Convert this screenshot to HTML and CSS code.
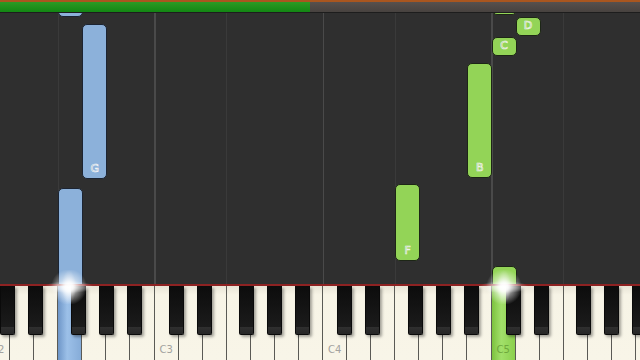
FILE: index.html
```html
<!DOCTYPE html>
<html lang="en">
<head>
    <meta charset="UTF-8">
    <title>Piano roll</title>
    <link rel="stylesheet" href="styles.css">
</head>
<body>
    <div class="progress">
        <div class="progress-fill"></div>
    </div>

    <div class="roll">
        <div class="lanes">
            <!-- falling notes, left = white key index * key width -->
            <div class="note blue" style="left: 72.2px; top: -20px; height: 24px;"></div>
            <div class="note blue" style="left: 96.3px; top: 11px; height: 155px;"><span>G</span></div>
            <div class="note blue" style="left: 72.2px; top: 175px; height: 120px;"></div>

            <div class="note green" style="left: 505.5px; top: -20px; height: 22px;"></div>
            <div class="note green" style="left: 529.5px; top: 4px; height: 19px;"><span>D</span></div>
            <div class="note green" style="left: 505.5px; top: 24px; height: 19px;"><span>C</span></div>
            <div class="note green" style="left: 481.4px; top: 50px; height: 115px;"><span>B</span></div>
            <div class="note green" style="left: 409.2px; top: 171px; height: 77px;"><span>F</span></div>
            <div class="note green" style="left: 505.5px; top: 253px; height: 60px;"></div>
        </div>
    </div>

    <div class="keyboard">
        <div class="glow glow-f2"></div>
        <div class="glow glow-c5"></div>
        <div class="keys">
            <div class="octave">
                <div class="white"><span>C2</span></div>
                <div class="white"></div>
                <div class="white"></div>
                <div class="white hit-blue"></div>
                <div class="white"></div>
                <div class="white"></div>
                <div class="white"></div>
                <div class="black cs"></div>
                <div class="black ds"></div>
                <div class="black fs"></div>
                <div class="black gs"></div>
                <div class="black as"></div>
            </div>
            <div class="octave">
                <div class="white"><span>C3</span></div>
                <div class="white"></div>
                <div class="white"></div>
                <div class="white"></div>
                <div class="white"></div>
                <div class="white"></div>
                <div class="white"></div>
                <div class="black cs"></div>
                <div class="black ds"></div>
                <div class="black fs"></div>
                <div class="black gs"></div>
                <div class="black as"></div>
            </div>
            <div class="octave">
                <div class="white"><span>C4</span></div>
                <div class="white"></div>
                <div class="white"></div>
                <div class="white"></div>
                <div class="white"></div>
                <div class="white"></div>
                <div class="white"></div>
                <div class="black cs"></div>
                <div class="black ds"></div>
                <div class="black fs"></div>
                <div class="black gs"></div>
                <div class="black as"></div>
            </div>
            <div class="octave">
                <div class="white hit-green"><span>C5</span></div>
                <div class="white"></div>
                <div class="white"></div>
                <div class="white"></div>
                <div class="white"></div>
                <div class="white"></div>
                <div class="white"></div>
                <div class="black cs"></div>
                <div class="black ds"></div>
                <div class="black fs"></div>
                <div class="black gs"></div>
                <div class="black as"></div>
            </div>
        </div>
    </div>
</body>
</html>
```

FILE: styles.css
```css
body, html {
    margin: 0;
    padding: 0;
    width: 640px;
    height: 360px;
    overflow: hidden;
    background-color: #2f2f2f;
    font-family: "DejaVu Sans", sans-serif;
}

.progress {
    height: 10px;
    border-top: 2px solid #a9561f;
    border-bottom: 1px solid #1d1d1d;
    background: linear-gradient(#57504d, #47423f);
}

.progress-fill {
    width: 310px;
    height: 100%;
    background: linear-gradient(#2c9a24, #138713);
}

.roll {
    height: 271px;
    overflow: hidden;
}

.lanes {
    position: relative;
    margin-left: -14px;
    width: 674px;
    height: 100%;
    background-color: #2f2f2f;
    background-image: repeating-linear-gradient(90deg,
        #4a4a4a 0, #4a4a4a 1px,
        transparent 1px, transparent 72px,
        #3a3a3a 72px, #3a3a3a 73px,
        transparent 73px, transparent 168.5px);
}

.note {
    position: absolute;
    width: 25px;
    box-sizing: border-box;
    border-radius: 5px;
    border: 1px solid #1d2616;
    display: flex;
    align-items: flex-end;
    justify-content: center;
}

.note.blue {
    background-color: #8cb1da;
    border-color: #1c2432;
}

.note.green {
    background-color: #93d457;
}

.note span {
    font-size: 11px;
    line-height: 11px;
    margin-bottom: 4px;
    color: rgba(40, 40, 40, 0.25);
    -webkit-text-stroke: 0.7px rgba(250, 250, 250, 0.95);
}

.keyboard {
    position: relative;
    height: 74px;
    border-top: 2px solid #8e2222;
}

.keys {
    display: flex;
    margin-left: -14px;
    width: 674px;
    height: 100%;
    overflow: hidden;
}

.octave {
    position: relative;
    flex: 1;
    display: flex;
}

.white {
    flex: 1;
    box-sizing: border-box;
    border-right: 1px solid #5a5a55;
    background: linear-gradient(#e8e4d6, #f7f4e6 12%, #f8f5e8);
    display: flex;
    align-items: flex-end;
}

.white span {
    font-size: 10px;
    color: #a3a3a0;
    margin: 0 0 5px 5px;
}

.white.hit-blue {
    background: linear-gradient(90deg, #6e96c8, #9cc0e8 40%, #86acd8);
}

.white.hit-green {
    background: linear-gradient(90deg, #7cc23e, #a2e06a 40%, #8bd04d);
}

.white.hit-green span {
    color: #6ea83c;
}

.black {
    position: absolute;
    top: 0;
    width: 15px;
    height: 49px;
    box-sizing: border-box;
    background: linear-gradient(#0c0c0c, #1b1b1b 85%, #2f2f2f 86%, #262626);
    border: 1px solid #0a0a0a;
    border-top: none;
    border-radius: 0 0 2px 2px;
    box-shadow: 2px 2px 3px rgba(0, 0, 0, 0.35);
}

.black.cs { left: 8.6%; }
.black.ds { left: 25.2%; }
.black.fs { left: 50.4%; }
.black.gs { left: 66.9%; }
.black.as { left: 83.5%; }

.glow {
    position: absolute;
    top: -16px;
    width: 50px;
    height: 34px;
    z-index: 2;
    background:
        radial-gradient(circle at center, rgba(255, 255, 255, 1) 0, rgba(255, 255, 255, 0.9) 4px, rgba(255, 255, 255, 0.45) 10px, rgba(255, 255, 255, 0) 18px),
        radial-gradient(ellipse 50% 18% at center, rgba(255, 255, 255, 0.8) 0, rgba(255, 255, 255, 0) 100%),
        radial-gradient(ellipse 14% 50% at center, rgba(255, 255, 255, 0.6) 0, rgba(255, 255, 255, 0) 100%);
}

.glow-f2 { left: 44px; }
.glow-c5 { left: 479px; }
```
